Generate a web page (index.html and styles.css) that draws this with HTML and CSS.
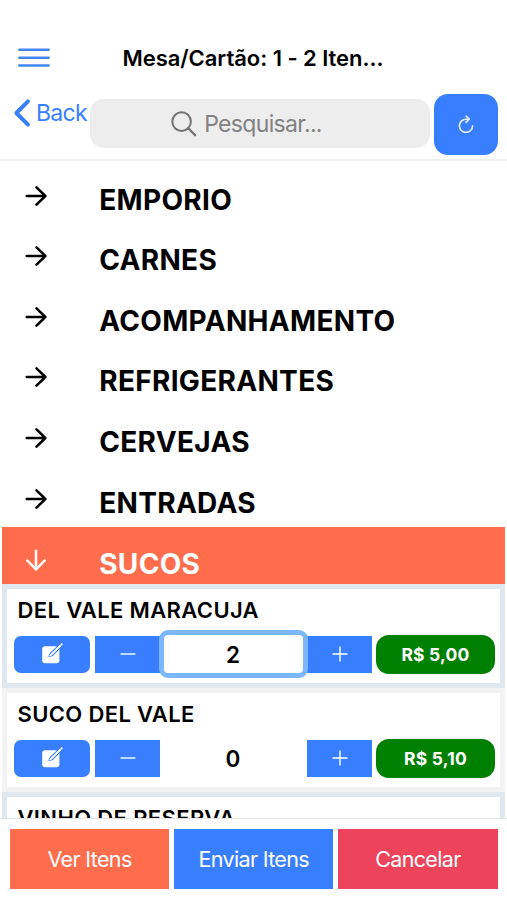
FILE: index.html
```html
<!DOCTYPE html>
<html lang="pt-BR">
<head>
<meta charset="utf-8">
<title>Mesa/Cartão</title>
<link rel="stylesheet" href="styles.css">
</head>
<body>
<svg class="sprite" width="0" height="0">
  <symbol id="arrow" viewBox="0 0 22 22"><path d="M1.7 11H20.4M11.5 2.3L20.4 11L11.5 19.7" fill="none" stroke="currentColor" stroke-width="2.5" stroke-linecap="round" stroke-linejoin="round"/></symbol>
  <symbol id="edit" viewBox="0 0 22 22"><rect x="1.2" y="3.2" width="17.2" height="17" rx="3" fill="currentColor"/><path d="M8.2 13.2L9.5 10.6L19.6 .8L21.3 2.5L11 12.6Z" fill="#387fff" stroke="#387fff" stroke-width="1.5" stroke-linejoin="round"/><path d="M8.5 13L10 10.9L19.1 2L20 2.9L10.8 11.9Z" fill="currentColor" stroke="currentColor" stroke-width=".8" stroke-linejoin="round"/><path d="M20.4 1.6l.4-.4" stroke="currentColor" stroke-width="1.8" stroke-linecap="round"/></symbol>
  <symbol id="minus" viewBox="0 0 16 16"><path d="M0.5 8H15.5" stroke="currentColor" stroke-width="1.4"/></symbol>
  <symbol id="plus" viewBox="0 0 16 16"><path d="M0.5 8H15.5M8 .5V15.5" stroke="currentColor" stroke-width="1.4"/></symbol>
</svg>
<div class="app">
  <header class="header">
    <div class="titlebar">
      <svg class="menu" viewBox="0 0 32 20"><path d="M1.3 1.8H30.7M1.3 9.8H30.7M1.3 17.6H30.7" stroke="currentColor" stroke-width="2.5" stroke-linecap="round"/></svg>
      <h1 class="title">Mesa/Cartão: 1 - 2 Iten...</h1>
    </div>
    <div class="toolbar">
      <div class="back">
        <svg class="chevron" viewBox="0 0 18 30"><path d="M15 3.4L3.3 15L15 26.6" fill="none" stroke="currentColor" stroke-width="3.9" stroke-linecap="round" stroke-linejoin="round"/></svg>
        <span>Back</span>
      </div>
      <div class="search">
        <svg class="glass" viewBox="0 0 26 26"><circle cx="10.6" cy="10.6" r="9.3" fill="none" stroke="currentColor" stroke-width="2"/><path d="M17.3 17.3L24.2 24.2" stroke="currentColor" stroke-width="2.3" stroke-linecap="round"/></svg>
        <span>Pesquisar...</span>
      </div>
      <div class="refresh">
        <svg class="refresh-icon" viewBox="0 0 16 18"><path d="M10.8 4.2H8A6.6 6.6 0 1 0 14.6 10.8" fill="none" stroke="currentColor" stroke-width="1.6" stroke-linecap="round"/><path d="M8 1.2L11.2 4.2L8 7.4" fill="none" stroke="currentColor" stroke-width="1.6" stroke-linecap="round" stroke-linejoin="round"/></svg>
      </div>
    </div>
  </header>
  <main class="content">
    <div class="row"><svg class="arrow"><use href="#arrow"/></svg><span>EMPORIO</span></div>
    <div class="row"><svg class="arrow"><use href="#arrow"/></svg><span>CARNES</span></div>
    <div class="row"><svg class="arrow"><use href="#arrow"/></svg><span>ACOMPANHAMENTO</span></div>
    <div class="row"><svg class="arrow"><use href="#arrow"/></svg><span>REFRIGERANTES</span></div>
    <div class="row"><svg class="arrow"><use href="#arrow"/></svg><span>CERVEJAS</span></div>
    <div class="row"><svg class="arrow"><use href="#arrow"/></svg><span>ENTRADAS</span></div>
    <div class="row active"><svg class="arrow down"><use href="#arrow"/></svg><span>SUCOS</span></div>
    <section class="card tinted">
      <h2 class="name">DEL VALE MARACUJA</h2>
      <div class="controls">
        <div class="edit"><svg class="edit-icon"><use href="#edit"/></svg></div>
        <div class="step"><svg class="step-icon"><use href="#minus"/></svg></div>
        <div class="qty focused">2</div>
        <div class="step"><svg class="step-icon"><use href="#plus"/></svg></div>
        <div class="price">R$ 5,00</div>
      </div>
    </section>
    <section class="card">
      <h2 class="name">SUCO DEL VALE</h2>
      <div class="controls">
        <div class="edit"><svg class="edit-icon"><use href="#edit"/></svg></div>
        <div class="step"><svg class="step-icon"><use href="#minus"/></svg></div>
        <div class="qty">0</div>
        <div class="step"><svg class="step-icon"><use href="#plus"/></svg></div>
        <div class="price">R$ 5,10</div>
      </div>
    </section>
    <section class="card tinted">
      <h2 class="name">VINHO DE RESERVA</h2>
    </section>
  </main>
  <footer class="footer">
    <div class="action orange">Ver Itens</div>
    <div class="action blue">Enviar Itens</div>
    <div class="action red">Cancelar</div>
  </footer>
</div>
</body>
</html>
```
FILE: styles.css
```css
* { box-sizing: border-box; }
body { margin: 0; background: #fff; color: #000; font-family: Inter, "Liberation Sans", sans-serif; }
.sprite { display: none; }
.app { width: 507px; height: 900px; display: flex; flex-direction: column; overflow: hidden; }
.header { height: 161px; flex: none; padding-top: 38px; border-bottom: 2px solid #efefef; }
.titlebar { display: grid; grid-template-columns: 122.5px 1fr; align-items: center; height: 40px; }
.menu { width: 32px; height: 20px; margin-left: 18px; color: #4285f0; }
.title { margin: 0; font-size: 22px; line-height: 26px; font-weight: 600; letter-spacing: -0.05px; white-space: nowrap; }
.toolbar { display: flex; padding-top: 16px; }
.back { width: 90px; height: 37px; padding-left: 13px; display: flex; align-items: center; gap: 5px; color: #387fff; font-size: 23px; letter-spacing: -0.7px; }
.chevron { width: 18px; height: 30px; flex: none; }
.search { width: 340px; height: 49px; margin-top: 5px; border-radius: 14px; background: #ededed; color: #818181; display: flex; justify-content: center; align-items: center; gap: 7px; font-size: 23px; letter-spacing: -0.65px; padding-right: 27px; }
.glass { width: 26px; height: 26px; color: #737373; }
.refresh { width: 64px; height: 61px; margin-left: 4px; border-radius: 14px; background: #387fff; color: #e4eeff; display: flex; justify-content: center; align-items: center; }
.refresh-icon { width: 16px; height: 18px; position: relative; top: -1px; }
.content { flex: 1; min-height: 0; overflow: hidden; padding: 1.7px 2px 0; }
.row { height: 60.67px; padding: 13px 0 0 22.7px; display: flex; align-items: center; font-size: 28px; font-weight: 700; letter-spacing: 0.32px; }
.row span { margin-left: 52.5px; }
.arrow { width: 22px; height: 22px; position: relative; top: -4px; }
.arrow.down { transform: rotate(90deg); }
.row.active { height: 57px; padding-top: 17px; background: #ff6d4d; color: #fff; }
.card { height: 104px; border: 5px solid #f3f3f3; padding: 6px 0 0 7px; background: #fff; }
.card.tinted { border-color: #dfe8ef; }
.name { margin: 0; padding-left: 3.5px; font-size: 22px; line-height: 30px; font-weight: 600; letter-spacing: 0.36px; white-space: nowrap; }
.controls { display: flex; align-items: center; height: 37px; margin-top: 11px; color: #fff; }
.edit { width: 76px; height: 37px; border-radius: 7px; background: #387fff; display: flex; justify-content: center; align-items: center; }
.edit-icon { width: 22px; height: 22px; }
.step { width: 65px; height: 37px; background: #387fff; display: flex; justify-content: center; align-items: center; }
.edit + .step { margin-left: 5px; }
.step-icon { width: 16px; height: 16px; }
.qty { width: 147px; height: 37px; padding-right: 1px; display: flex; justify-content: center; align-items: center; color: #000; font-size: 22.5px; font-weight: 600; }
.qty.focused { width: 149px; height: 48px; margin: 0 -1px; border: 5px solid #7cb6fc; border-radius: 9px; background: #fff; z-index: 1; }
.price { width: 119px; height: 39px; margin-left: 4px; border-radius: 13px; background: #008000; display: flex; justify-content: center; align-items: center; font-size: 17.5px; font-weight: 700; letter-spacing: 0.2px; }
.footer { height: 82px; flex: none; border-top: 1px solid #e3e3e3; background: #fff; padding: 10px 9.5px 0 10px; display: grid; grid-template-columns: repeat(3, 1fr); gap: 5px; }
.action { height: 60px; color: #fff; display: flex; justify-content: center; align-items: center; font-size: 21.5px; letter-spacing: -0.65px; }
.orange { background: #ff6d4d; }
.blue { background: #387fff; }
.red { background: #ed445b; }
```
